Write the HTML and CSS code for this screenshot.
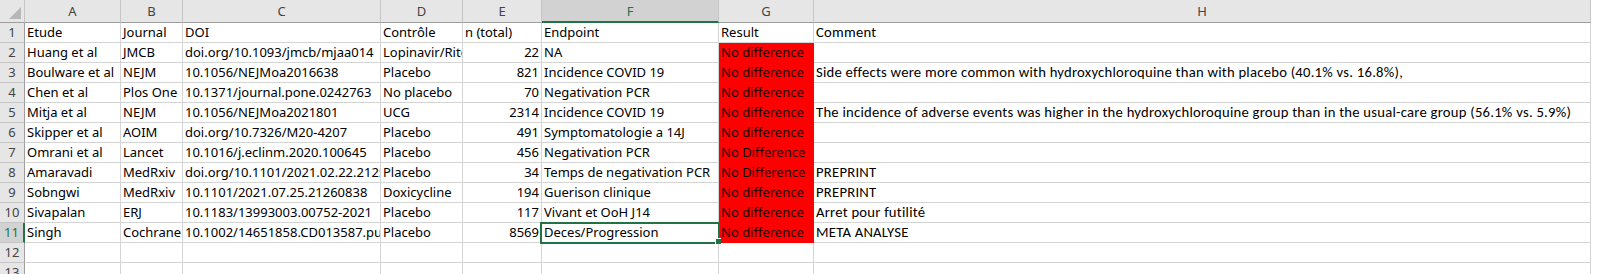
FILE: index.html
```html
<!DOCTYPE html>
<html lang="fr">
<head>
<meta charset="utf-8">
<title>Feuille</title>
<link rel="stylesheet" href="styles.css">
</head>
<body>
<div class="sheet">
  <div class="row head">
    <div class="corner"><span class="tri"></span></div>
    <div class="ch">A</div><div class="ch">B</div><div class="ch">C</div><div class="ch">D</div><div class="ch">E</div><div class="ch sel">F</div><div class="ch">G</div><div class="ch">H</div>
  </div>
  <div class="row">
    <div class="rh">1</div>
    <div class="c">Etude</div><div class="c">Journal</div><div class="c">DOI</div><div class="c">Contrôle</div><div class="c">n (total)</div><div class="c">Endpoint</div><div class="c">Result</div><div class="c cm"><span>Comment</span></div>
  </div>
  <div class="row">
    <div class="rh">2</div>
    <div class="c">Huang et al</div><div class="c">JMCB</div><div class="c">doi.org/10.1093/jmcb/mjaa014</div><div class="c">Lopinavir/Ritonavir</div><div class="c n">22</div><div class="c">NA</div><div class="c red">No difference</div><div class="c cm"></div>
  </div>
  <div class="row">
    <div class="rh">3</div>
    <div class="c">Boulware et al</div><div class="c">NEJM</div><div class="c">10.1056/NEJMoa2016638</div><div class="c">Placebo</div><div class="c n">821</div><div class="c">Incidence COVID 19</div><div class="c red">No difference</div><div class="c cm"><span>Side effects were more common with hydroxychloroquine than with placebo (40.1% vs. 16.8%),</span></div>
  </div>
  <div class="row">
    <div class="rh">4</div>
    <div class="c">Chen et al</div><div class="c">Plos One</div><div class="c">10.1371/journal.pone.0242763</div><div class="c">No placebo</div><div class="c n">70</div><div class="c">Negativation PCR</div><div class="c red">No difference</div><div class="c cm"></div>
  </div>
  <div class="row">
    <div class="rh">5</div>
    <div class="c">Mitja et al</div><div class="c">NEJM</div><div class="c">10.1056/NEJMoa2021801</div><div class="c">UCG</div><div class="c n">2314</div><div class="c">Incidence COVID 19</div><div class="c red">No difference</div><div class="c cm"><span>The incidence of adverse events was higher in the hydroxychloroquine group than in the usual-care group (56.1% vs. 5.9%)</span></div>
  </div>
  <div class="row">
    <div class="rh">6</div>
    <div class="c">Skipper et al</div><div class="c">AOIM</div><div class="c">doi.org/10.7326/M20-4207</div><div class="c">Placebo</div><div class="c n">491</div><div class="c">Symptomatologie a 14J</div><div class="c red">No difference</div><div class="c cm"></div>
  </div>
  <div class="row">
    <div class="rh">7</div>
    <div class="c">Omrani et al</div><div class="c">Lancet</div><div class="c">10.1016/j.eclinm.2020.100645</div><div class="c">Placebo</div><div class="c n">456</div><div class="c">Negativation PCR</div><div class="c red">No Difference</div><div class="c cm"></div>
  </div>
  <div class="row">
    <div class="rh">8</div>
    <div class="c">Amaravadi</div><div class="c">MedRxiv</div><div class="c">doi.org/10.1101/2021.02.22.21252228</div><div class="c">Placebo</div><div class="c n">34</div><div class="c">Temps de negativation PCR</div><div class="c red">No Difference</div><div class="c cm"><span>PREPRINT</span></div>
  </div>
  <div class="row">
    <div class="rh">9</div>
    <div class="c">Sobngwi</div><div class="c">MedRxiv</div><div class="c">10.1101/2021.07.25.21260838</div><div class="c">Doxicycline</div><div class="c n">194</div><div class="c">Guerison clinique</div><div class="c red">No difference</div><div class="c cm"><span>PREPRINT</span></div>
  </div>
  <div class="row">
    <div class="rh">10</div>
    <div class="c">Sivapalan</div><div class="c">ERJ</div><div class="c">10.1183/13993003.00752-2021</div><div class="c">Placebo</div><div class="c n">117</div><div class="c">Vivant et OoH J14</div><div class="c red">No difference</div><div class="c cm"><span>Arret pour futilité</span></div>
  </div>
  <div class="row">
    <div class="rh sel">11</div>
    <div class="c">Singh</div><div class="c">Cochrane</div><div class="c">10.1002/14651858.CD013587.pub3</div><div class="c">Placebo</div><div class="c n">8569</div><div class="c active">Deces/Progression<span class="handle"></span></div><div class="c red">No difference</div><div class="c cm"><span>META ANALYSE</span></div>
  </div>
  <div class="row">
    <div class="rh">12</div>
    <div class="c"></div><div class="c"></div><div class="c"></div><div class="c"></div><div class="c"></div><div class="c"></div><div class="c"></div><div class="c cm"></div>
  </div>
  <div class="row">
    <div class="rh">13</div>
    <div class="c"></div><div class="c"></div><div class="c"></div><div class="c"></div><div class="c"></div><div class="c"></div><div class="c"></div><div class="c cm"></div>
  </div>
</div>
</body>
</html>
```
FILE: styles.css
```css
html, body {
  margin: 0;
  padding: 0;
  background: #ffffff;
}
body {
  font-family: "Noto Sans", "Open Sans", sans-serif;
  font-size: 13px;
  color: #000;
  overflow: hidden;
}
.sheet {
  width: 1597px;
}
.row {
  display: grid;
  grid-template-columns: 25px 96px 62px 198px 82px 79px 177px 95px 777px;
  height: 20px;
}
.row.head {
  height: 23px;
}
.row > div {
  box-sizing: border-box;
  border-right: 1px solid #d4d4d4;
  border-bottom: 1px solid #d4d4d4;
  white-space: nowrap;
  overflow: hidden;
  line-height: 19px;
}
.c {
  padding: 0 2px 0 2px;
}
.c.n {
  text-align: right;
}
.c.red {
  background: #ff0000;
  border-right-color: #ff0000;
  border-bottom-color: #ff0000;
  color: #1a0000;
}
.cm span {
  font-family: Carlito, "Liberation Sans", Arial, sans-serif;
  font-size: 14.667px;
  letter-spacing: 0.24px;
  color: #000;
}
.head > div {
  background: #e6e6e6;
  border-right: 1px solid #c6c6c6;
  border-bottom: 1px solid #9e9e9e;
  text-align: center;
  color: #444;
  line-height: 22px;
}
.head > div.sel {
  background: #d2d2d2;
  color: #217346;
  border-bottom: 2px solid #217346;
}
.corner {
  position: relative;
}
.tri {
  position: absolute;
  right: 3px;
  bottom: 3px;
  width: 0;
  height: 0;
  border-left: 12px solid transparent;
  border-bottom: 12px solid #b7b7b7;
}
.rh {
  background: #e6e6e6;
  color: #444;
  text-align: center;
  border-bottom-color: #c6c6c6 !important;
  border-right-color: #9e9e9e !important;
}
.rh.sel {
  background: #d2d2d2;
  color: #217346;
  border-right: 2px solid #217346 !important;
}
.c.active {
  position: relative;
  overflow: visible;
}
.c.active::after {
  content: "";
  position: absolute;
  left: -2px;
  top: -1px;
  width: 180px;
  height: 22px;
  box-sizing: border-box;
  border: 2px solid #217346;
  pointer-events: none;
}
.handle {
  position: absolute;
  left: 173px;
  top: 15px;
  width: 6px;
  height: 6px;
  box-sizing: border-box;
  background: #217346;
  border-left: 1px solid #fff;
  border-top: 1px solid #fff;
  z-index: 2;
}
```
